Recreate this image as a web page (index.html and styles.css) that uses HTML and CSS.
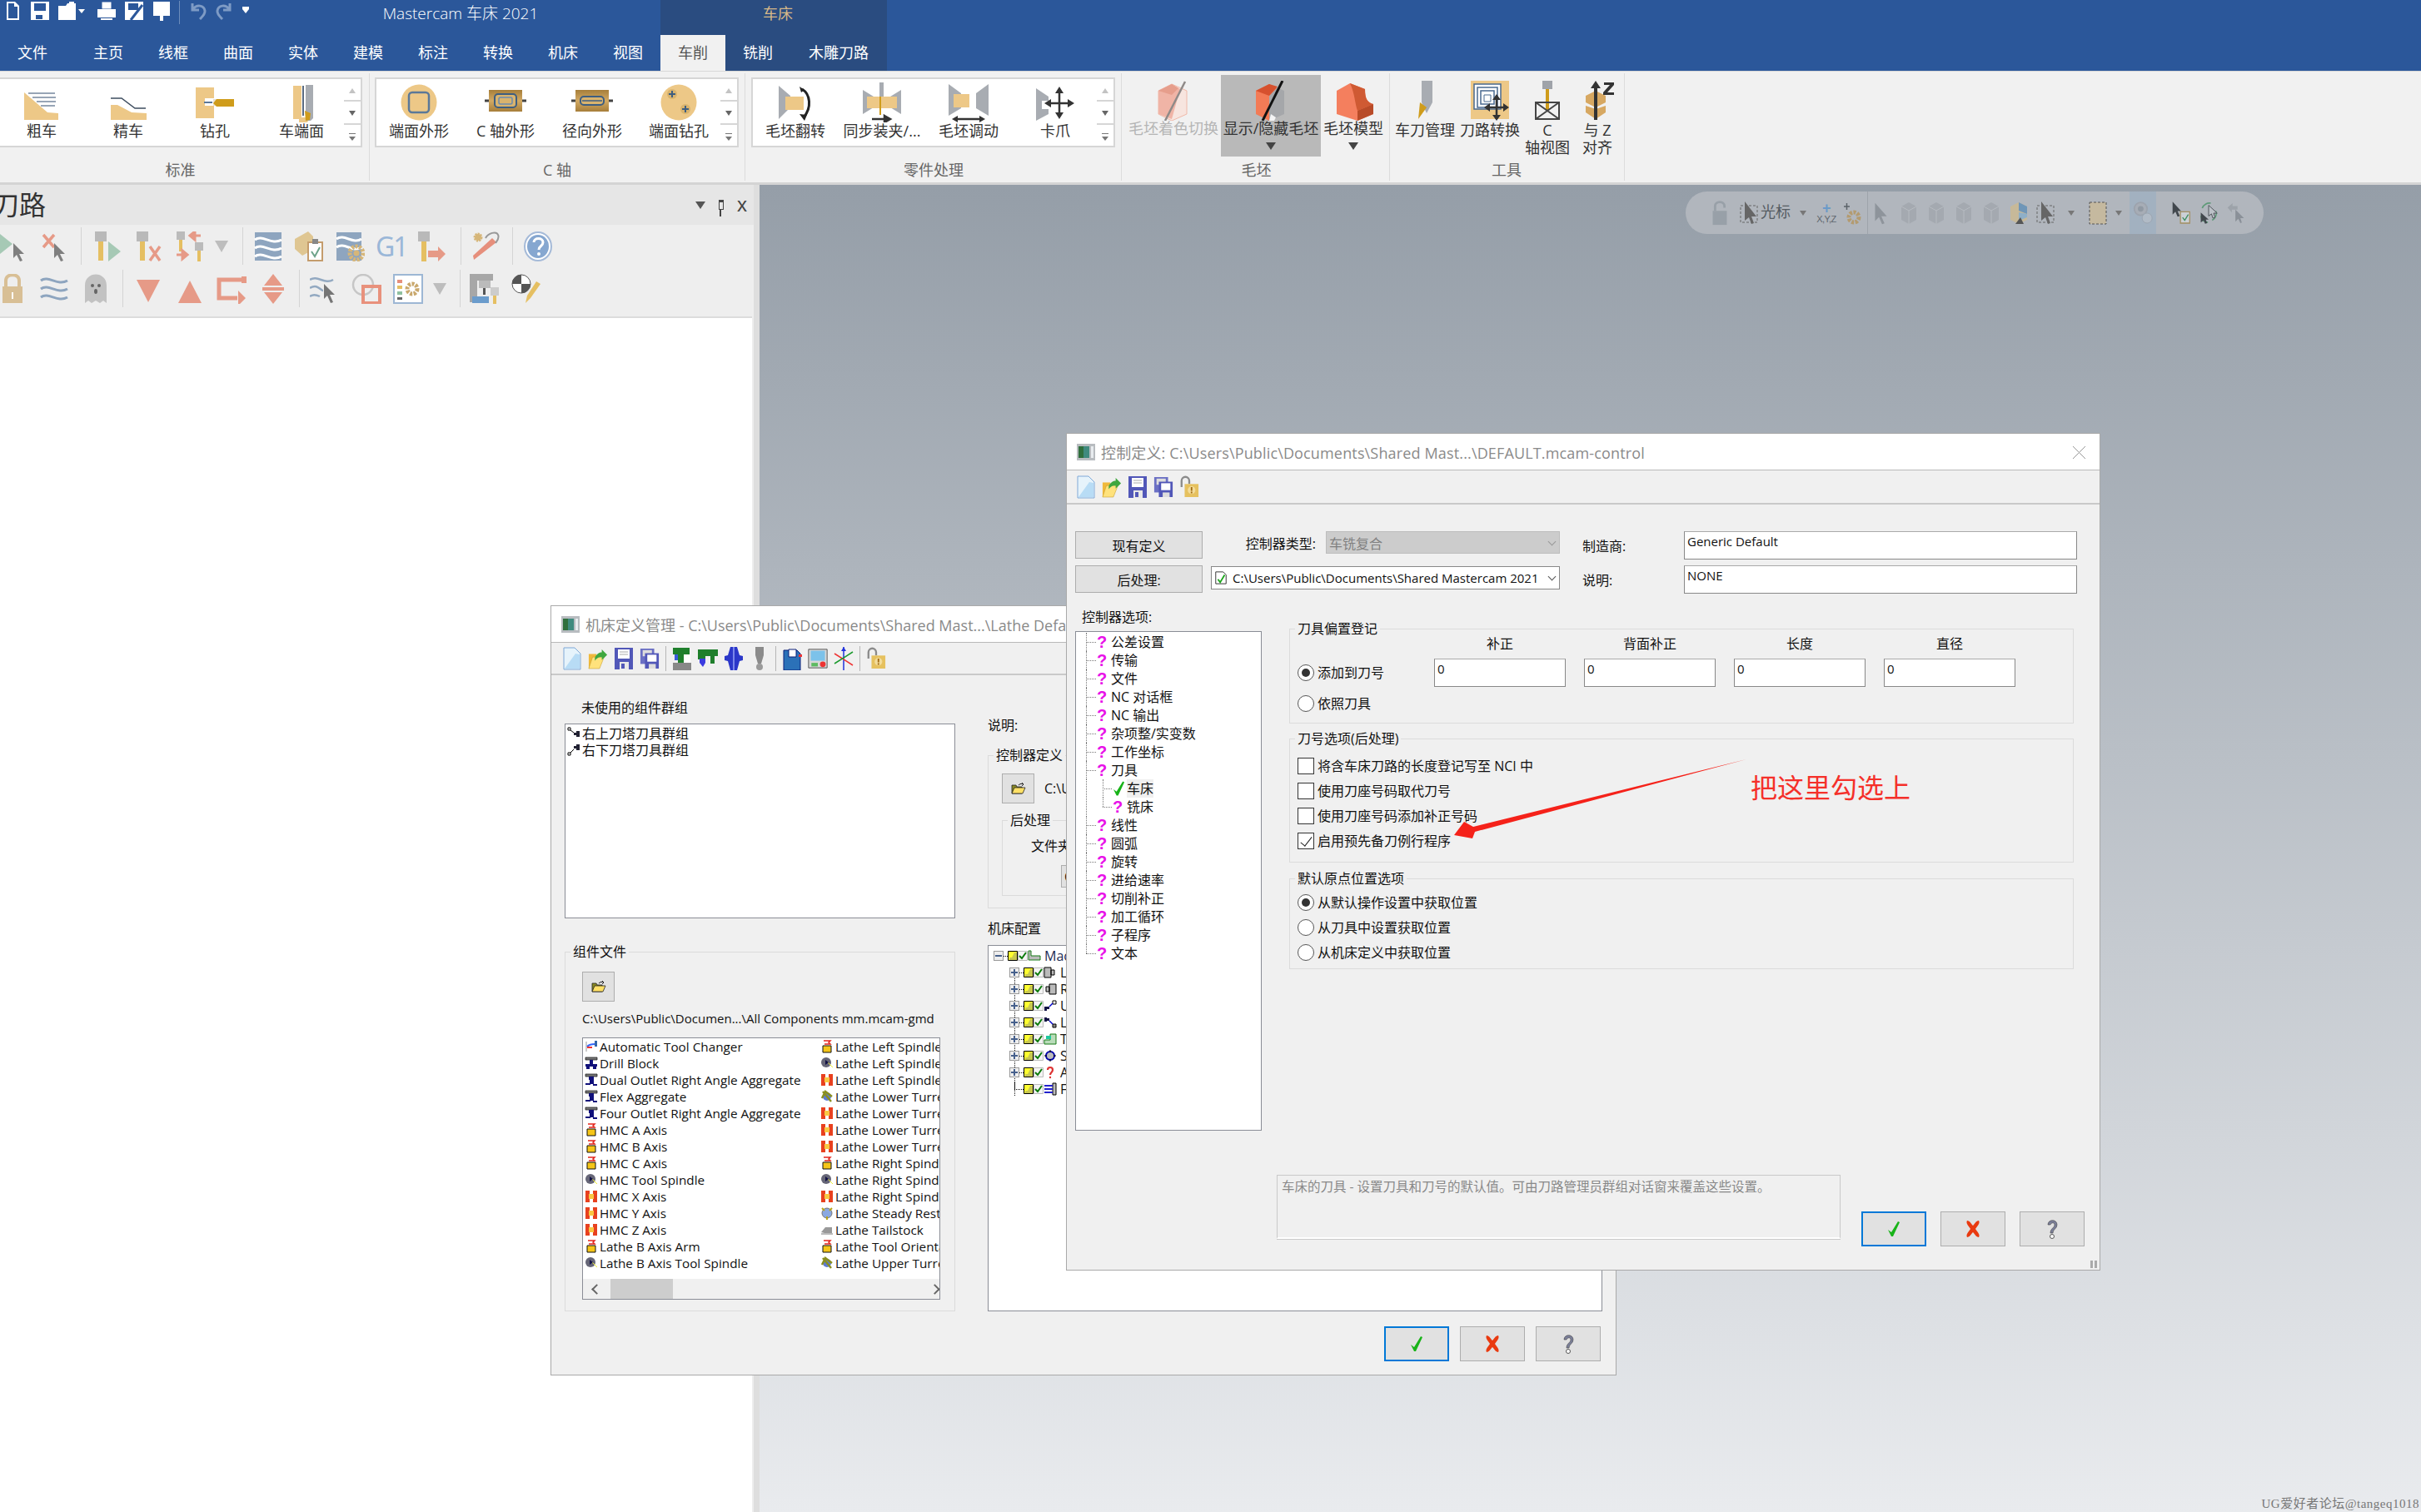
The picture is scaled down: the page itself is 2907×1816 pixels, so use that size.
FILE: index.html
```html
<!DOCTYPE html>
<html lang="zh">
<head>
<meta charset="utf-8">
<title>Mastercam 车床 2021</title>
<link rel="stylesheet" href="styles.css">
</head>
<body>
<svg class="defs" width="0" height="0">
<defs>
<symbol id="q-new" viewBox="0 0 24 24"><path d="M5 1h10l5 5v17H5z" fill="#fff"/><path d="M7 3v18h11V7h-4V3z" fill="#2b579a"/></symbol>
<symbol id="q-save" viewBox="0 0 24 24"><path d="M1 1h22v22H1z" fill="#fff"/><path d="M5 3h14v9H5z" fill="#2b579a"/><path d="M7 17h8v5H7z" fill="#2b579a"/></symbol>
<symbol id="q-open" viewBox="0 0 24 24"><path d="M1 6h9l2-3h10v20H1z" fill="#fff"/><path d="M14 1h6v5h-6z" fill="#fff"/></symbol>
<symbol id="q-print" viewBox="0 0 24 24"><path d="M6 1h12v9H6z" fill="#fff" stroke="#2b579a"/><path d="M1 10h22v10H1z" fill="#fff"/><path d="M5 21h14v2H5z" fill="#fff"/></symbol>
<symbol id="q-saveas" viewBox="0 0 24 24"><path d="M1 1h22v22H1z" fill="#fff"/><path d="M5 3h12v8H5z" fill="#2b579a"/><path d="M8 23L22 5" stroke="#2b579a" stroke-width="3"/></symbol>
<symbol id="q-pin" viewBox="0 0 24 24"><path d="M2 1h20v17H2z" fill="#fff"/><path d="M10 18h4v6h-4z" fill="#fff"/></symbol>
<symbol id="q-undo" viewBox="0 0 24 24"><path d="M6 3v8h8M7 10c4-6 13-5 14 2 .5 4-4 8-6 10" fill="none" stroke="#7e9bc5" stroke-width="3"/></symbol>
<symbol id="q-redo" viewBox="0 0 24 24"><path d="M18 3v8h-8M17 10c-4-6-13-5-14 2-.5 4 4 8 6 10" fill="none" stroke="#7e9bc5" stroke-width="3"/></symbol>

<symbol id="r-rough" viewBox="0 0 56 48"><path d="M7 12L35 36l13 1v8H7z" fill="#edc887"/><path d="M12 13h32M17 18h28M22 23h23M27 28h17" stroke="#75889f" stroke-width="1.5"/></symbol>
<symbol id="r-finish" viewBox="0 0 56 48"><path d="M7 27h8l17 9 18 1v8H7z" fill="#edc887"/><path d="M7 19h13l16 12h13" fill="none" stroke="#3e4d5f" stroke-width="1.5"/></symbol>
<symbol id="r-drill" viewBox="0 0 56 48"><path d="M5 6h22v13H16v9h11v15H5z" fill="#edc887"/><path d="M15 24h10" stroke="#5b7898" stroke-width="2"/><path d="M26 20h4v8h-4z" fill="#e9e2d2"/><path d="M30 20h21v9H30l-4-4z" fill="#cf9c1b"/></symbol>
<symbol id="r-face" viewBox="0 0 56 48"><path d="M18 4h10v40H18z" fill="#edc887"/><path d="M25 42h13l-3 6H25z" fill="#edc887"/><path d="M29 4h2v36h-2z" fill="#5b6b80"/><path d="M33 3h9v40l-3 3h-6z" fill="#a8acb2"/><path d="M32 34l7 3-1 8-5 1z" fill="#cf9c1b"/></symbol>
<symbol id="r-cface" viewBox="0 0 56 48"><circle cx="28" cy="24" r="21.5" fill="#edc887"/><rect x="16" y="12" width="24" height="24" rx="4" fill="none" stroke="#5b7898" stroke-width="2.5"/></symbol>
<linearGradient id="gb" x1="0" y1="0" x2="0" y2="1"><stop offset="0" stop-color="#a67e3a"/><stop offset=".5" stop-color="#d3aa64"/><stop offset="1" stop-color="#a67e3a"/></linearGradient>
<symbol id="r-caxis" viewBox="0 0 56 48"><path d="M8 9h40v26H8z" fill="url(#gb)"/><rect x="15" y="14" width="26" height="16" rx="4" fill="#d9b36d" stroke="#3e5e80" stroke-width="2"/><rect x="20" y="18" width="16" height="8" rx="2" fill="none" stroke="#6c8cae" stroke-width="1.5"/><path d="M3 22h5M48 22h5" stroke="#444" stroke-width="3"/></symbol>
<symbol id="r-radial" viewBox="0 0 56 48"><path d="M8 9h40v26H8z" fill="url(#gb)"/><rect x="14" y="17" width="28" height="10" rx="4" fill="#d9b36d" stroke="#3e5e80" stroke-width="2"/><path d="M16 22h24" stroke="#3e5e80" stroke-width="1.5"/><path d="M3 22h5M48 22h5" stroke="#444" stroke-width="3"/></symbol>
<symbol id="r-cdrill" viewBox="0 0 56 48"><circle cx="28" cy="24" r="21.5" fill="#edc887"/><circle cx="20" cy="14" r="6" fill="#d9b36d"/><circle cx="36" cy="32" r="6" fill="#d9b36d"/><path d="M16 14h8M20 10v8M32 32h8M36 28v8" stroke="#3e5e80" stroke-width="2"/></symbol>
<symbol id="r-flip" viewBox="0 0 56 48"><path d="M8 4l14 12v14L8 44z" fill="#a8acb2"/><path d="M16 17h22v16H16z" fill="#edc887"/><path d="M36 8c10 6 12 22 2 34" fill="none" stroke="#222" stroke-width="3"/><path d="M33 38l9 1-3 7z" fill="#222"/><path d="M33 5l6 4-4 3z" fill="#222"/></symbol>
<symbol id="r-sync" viewBox="0 0 56 48"><path d="M5 9l13 8v13L5 38zM51 9L38 17v13l13 8z" fill="#a8acb2"/><path d="M10 17h36v14H10z" fill="#edc887"/><path d="M25 0h5v17h-5z" fill="#a8acb2"/><path d="M25 17h2v22h-2z" fill="#cf9c1b"/><path d="M16 44h20M31 40l7 4-7 4z" stroke="#333" stroke-width="2.5" fill="#333"/></symbol>
<symbol id="r-stock" viewBox="0 0 56 48"><path d="M4 2l15 11v18L4 40zM52 2L37 13v18l15 9z" fill="#a8acb2"/><path d="M10 14h19v16H10z" fill="#edc887"/><path d="M30 15h7v14h-7z" fill="#fff"/><path d="M12 44h32" stroke="#333" stroke-width="2.5"/><path d="M8 44l7-4v8zM48 44l-7-4v8z" fill="#333"/></symbol>
<symbol id="r-jaw" viewBox="0 0 56 48"><path d="M5 7l15 10v5h-8v10h8v6L5 46z" fill="#a8acb2"/><path d="M33 8v32M19 25h28" stroke="#333" stroke-width="2.5"/><path d="M33 5l-5 8h10zM33 44l-5-8h10zM15 25l8-5v10zM51 25l-8-5v10z" fill="#333"/></symbol>
<symbol id="r-shade" viewBox="0 0 56 48"><path d="M10 12l16-8 18 8v28l-18 8-16-8z" fill="#f7e5df" stroke="#f0b9a9"/><path d="M10 12l16-8 10 6-10 36-16-6z" fill="#f0b4a6"/><path d="M10 12l16-8 8 5-8 8z" fill="#e69e8c"/><path d="M42 1L18 48" stroke="#8f8a88" stroke-width="2.5"/></symbol>
<symbol id="r-show" viewBox="0 0 56 48"><path d="M10 12l16-8 18 8v28l-18 8-16-8z" fill="#a5a7aa"/><path d="M10 12l16-8 9 5-9 9L26 48l-16-8z" fill="#f37b56"/><path d="M10 12l16-8 10 3-10 11z" fill="#d6512e"/><path d="M26 48h6l2-4-6-4z" fill="#f4f4f4"/><path d="M42 0L18 48" stroke="#111" stroke-width="3"/></symbol>
<symbol id="r-model" viewBox="0 0 56 48"><path d="M8 12l16-9 18 7c0 12 3 16 10 18v12l-19 8-25-8z" fill="#f47f5e"/><path d="M24 3l18 7c0 12 3 16 10 18l-19 8C30 28 30 16 24 3z" fill="#cf5a33"/><path d="M33 36l19-8v12l-19 8z" fill="#b84b28"/></symbol>
<symbol id="r-toolm" viewBox="0 0 56 48"><path d="M24 0h13v26l-7 13-6-13z" fill="#a8acb2"/><path d="M22 26l8 6-10 14z" fill="#cf9c1b"/></symbol>
<symbol id="r-trans" viewBox="0 0 56 48"><path d="M5 0h46v46H5z" fill="#edc887"/><path d="M9 4h32v30H9zM13 8h24v24H13zM17 12h16v16H17z" fill="#fff" stroke="#4a6a90" stroke-width="1.5"/><path d="M21 17h8v8h-8z" fill="none" stroke="#4a6a90"/><path d="M36 20v26M24 32h24" stroke="#333" stroke-width="2.5"/><path d="M36 16l-5 7h10zM36 48l-5-7h10zM21 32l7-5v10zM51 32l-7-5v10z" fill="#333"/></symbol>
<symbol id="r-cview" viewBox="0 0 56 48"><path d="M22 0h12v10H22z" fill="#9fa3a9"/><path d="M26 10h4v25h-4z" fill="#cf9c1b"/><path d="M14 26h28v20H14zM14 26l28 20M42 26L14 46" fill="none" stroke="#444" stroke-width="2"/></symbol>
<symbol id="r-zalign" viewBox="0 0 56 48"><path d="M14 18l12-6 12 6v8l-12 6-12-6zM14 30l12 4 12-4v8l-12 8-12-8z" fill="#d7a862"/><path d="M24 5h4v42h-4z" fill="#333"/><path d="M26 0l-6 9h12z" fill="#333"/><path d="M36 2h12v3l-8 9h8v3H35v-3l8-9h-7z" fill="#333"/></symbol>

<symbol id="p-play" viewBox="0 0 36 36"><path d="M2 3l15 12-15 12z" fill="#a6c9b5"/><path d="M18 14v18l4-4 4 8 3-1-4-8h6z" fill="#7f7f7f"/></symbol>
<symbol id="p-x" viewBox="0 0 36 36"><path d="M5 4l13 15M18 4L5 19" stroke="#e69a87" stroke-width="3.5"/><path d="M18 14v18l4-4 4 8 3-1-4-8h6z" fill="#7f7f7f"/></symbol>
<symbol id="p-toolplay" viewBox="0 0 36 36"><path d="M4 0h14v12H4z" fill="#b9b9b9"/><path d="M8 12h6v23H8z" fill="#e5bf62"/><path d="M20 12l15 12-15 12z" fill="#a6c9b5"/></symbol>
<symbol id="p-toolx" viewBox="0 0 36 36"><path d="M4 0h14v12H4z" fill="#b9b9b9"/><path d="M8 12h6v23H8z" fill="#e5bf62"/><path d="M20 18l12 17M32 18L20 35" stroke="#e69a87" stroke-width="3.5"/></symbol>
<symbol id="p-toolswap" viewBox="0 0 36 36"><path d="M2 0h10v10H2zM24 13h10v10H24z" fill="#bbb"/><path d="M5 10h4v14H5zM27 23h4v13h-4z" fill="#e5bf62"/><path d="M31 5H18M18 5l6-5v10zM2 28h13M15 28l-6-5v10z" stroke="#e69a87" stroke-width="3" fill="#e69a87"/></symbol>
<symbol id="p-wave" viewBox="0 0 36 36"><path d="M2 1h32v34H2z" fill="#8ea5bf"/><path d="M2 10c9-7 20 7 32 0M2 20c9-7 20 7 32 0M2 30c9-7 20 7 32 0" fill="none" stroke="#fff" stroke-width="3"/></symbol>
<symbol id="p-box" viewBox="0 0 36 36"><path d="M1 9L17 0l6 6v16l-13 7-9-8z" fill="#dfc692"/><path d="M17 13h17v22H17z" fill="#fff" stroke="#c49c6c" stroke-width="2"/><path d="M21 24l4 6 6-11" fill="none" stroke="#6ea38a" stroke-width="2"/><path d="M22 9h7v6h-7z" fill="#888"/></symbol>
<symbol id="p-wavegear" viewBox="0 0 36 36"><path d="M2 1h30v34H2z" fill="#8ea5bf"/><path d="M2 9c9-7 20 7 30 0M2 19c9-7 20 7 30 0" fill="none" stroke="#fff" stroke-width="3"/><circle cx="26" cy="26" r="8" fill="none" stroke="#d6b679" stroke-width="5" stroke-dasharray="3 1.5"/><circle cx="26" cy="26" r="3.5" fill="#d6b679"/></symbol>
<symbol id="p-toolarrow" viewBox="0 0 36 36"><path d="M2 0h14v12H2z" fill="#b9b9b9"/><path d="M6 12h6v24H6z" fill="#e5bf62"/><path d="M14 23h12v-5l9 9-9 9v-5H14z" fill="#e69a87"/></symbol>
<symbol id="p-stick" viewBox="0 0 36 36"><path d="M3 34l-1-5L25 8l5 5z" fill="#e68f7c"/><path d="M17 8c3-6 13-9 15-4 2 4-1 7-3 10" fill="none" stroke="#999" stroke-width="2"/><circle cx="8" cy="7" r="4" fill="#d6b679" stroke="#d6b679" stroke-dasharray="2 1" stroke-width="3"/></symbol>
<symbol id="p-help" viewBox="0 0 36 36"><ellipse cx="18" cy="18" rx="16" ry="17" fill="#fff" stroke="#a5bad8" stroke-width="2"/><ellipse cx="18" cy="18" rx="13" ry="14" fill="#86a7d0"/><path d="M13 13c0-6 11-6 11 0 0 5-5 4-5 9" fill="none" stroke="#fff" stroke-width="3"/><circle cx="19" cy="27" r="2" fill="#fff"/></symbol>
<symbol id="p-lock" viewBox="0 0 36 36"><path d="M10 15V8c0-9 16-9 16 0v7" fill="none" stroke="#d8bf95" stroke-width="4"/><path d="M6 15h24v20H6z" fill="#d8bf95"/><path d="M17 22h2v8h-2z" fill="#fff"/></symbol>
<symbol id="p-waves" viewBox="0 0 36 36"><path d="M2 8c9-7 20 7 32 0M2 18c9-7 20 7 32 0M2 28c9-7 20 7 32 0" fill="none" stroke="#8ea5bf" stroke-width="3"/></symbol>
<symbol id="p-ghost" viewBox="0 0 36 36"><path d="M5 35V14c0-18 26-18 26 0v21l-4-3-4 3-5-3-5 3-4-3z" fill="#c2c2c2"/><circle cx="14" cy="14" r="2" fill="#666"/><circle cx="22" cy="14" r="2" fill="#666"/><ellipse cx="18" cy="21" rx="2" ry="3" fill="#666"/></symbol>
<symbol id="p-down" viewBox="0 0 36 36"><path d="M4 7h28L18 34z" fill="#e69a87"/></symbol>
<symbol id="p-up" viewBox="0 0 36 36"><path d="M4 35h28L18 8z" fill="#e69a87"/></symbol>
<symbol id="p-loop" viewBox="0 0 36 36"><path d="M30 7H3v22h22" fill="none" stroke="#e69a87" stroke-width="5"/><path d="M30 3h6v8h-6zM26 20l9 9-9 9z" fill="#e69a87"/></symbol>
<symbol id="p-updown" viewBox="0 0 36 36"><path d="M18 0l11 14H7zM18 36l11-14H7zM5 16h26v4H5z" fill="#e69a87"/></symbol>
<symbol id="p-wavecur" viewBox="0 0 36 36"><path d="M0 7c9-6 18 6 28 0M0 17c9-6 13 3 16 3M0 27c4-3 8-2 12 0" fill="none" stroke="#93a9c1" stroke-width="2.5"/><path d="M17 12v18l4-4 4 9 3-1-4-9h6z" fill="#757575"/></symbol>
<symbol id="p-circsq" viewBox="0 0 36 36"><circle cx="14" cy="13" r="12" fill="none" stroke="#c6c6c6" stroke-width="2.5"/><path d="M14 15h20v20H14z" fill="none" stroke="#e8917c" stroke-width="4"/></symbol>
<symbol id="p-list" viewBox="0 0 36 36"><path d="M1 1h34v34H1z" fill="#fff" stroke="#9db7d4" stroke-width="2"/><path d="M5 7h6v4H5z" fill="#e68f7c"/><path d="M5 14h6v4H5z" fill="#e5bf62"/><path d="M5 21h6v4H5z" fill="#8fc0a0"/><path d="M5 28h6v3H5z" fill="#666"/><circle cx="23" cy="18" r="6" fill="none" stroke="#c9a86d" stroke-width="5" stroke-dasharray="3 1.5"/></symbol>
<symbol id="p-machine" viewBox="0 0 36 36"><path d="M0 0h28v8H0zM0 8h9v26H0z" fill="#a7a7a7"/><path d="M11 8h14v9H11z" fill="#bbb"/><path d="M16 17h3v8h-3z" fill="#555"/><path d="M3 27h20v8H3z" fill="#6b9ccc"/><path d="M25 16h10v10H25z" fill="#ccc"/><path d="M28 26h4v10h-4z" fill="#e5bf62"/></symbol>
<symbol id="p-disc" viewBox="0 0 36 36"><circle cx="12" cy="12" r="11" fill="#fff" stroke="#555"/><path d="M12 12V1a11 11 0 0 0-11 11zM12 12v11a11 11 0 0 0 11-11z" fill="#555"/><path d="M17 35l2-9L30 9l5 3-12 17z" fill="#e5bf62"/></symbol>

<symbol id="d-title" viewBox="0 0 22 20"><path d="M0 0h22v20H0z" fill="#b8bcc0"/><path d="M2 3h13v14H2z" fill="#3f8a7e"/><path d="M2 3h6v14H2z" fill="#2f6f3d"/><path d="M17 3h3v14h-3z" fill="#e8ecef"/></symbol>
<symbol id="d-new" viewBox="0 0 24 28"><path d="M2 1h13l7 7v19H2z" fill="#e6f3fb" stroke="#7ea9d8"/><path d="M3 26L16 8l5 1v17z" fill="#b8dcf5"/></symbol>
<symbol id="d-open" viewBox="0 0 26 28"><path d="M1 8h10v19H1z" fill="#f0b93b"/><path d="M1 27l5-15h15l-6 15z" fill="#ffe27c" stroke="#c49a2b" stroke-width=".6"/><path d="M9 13c2-5 6-7 9-7V2l7 7-7 7v-4c-3 0-6 0-9 5z" fill="#3fa73f"/></symbol>
<symbol id="d-save" viewBox="0 0 24 28"><path d="M1 1h22v26H1z" fill="#5157b8"/><path d="M5 3h14v11H5z" fill="#fff"/><path d="M7 6h10M7 9h10" stroke="#aaa"/><path d="M7 18h11v9H7z" fill="#e8e8e8"/><path d="M9 20h4v6H9z" fill="#5157b8"/></symbol>
<symbol id="d-saveall" viewBox="0 0 26 28"><path d="M1 1h18v20H1z" fill="#6b70c4"/><path d="M4 3h12v8H4z" fill="#ddd"/><path d="M7 7h18v20H7z" fill="#5157b8"/><path d="M10 9h12v9H10z" fill="#fff"/><path d="M12 21h9v6h-9z" fill="#ddd"/></symbol>
<symbol id="d-lock" viewBox="0 0 26 28"><path d="M3 14V6c0-7 10-7 10 0v4" fill="none" stroke="#8b8b8b" stroke-width="2.5"/><path d="M7 10h18v17H7z" fill="#e6c15f"/><circle cx="16" cy="18" r="5" fill="#f3dc9b"/><path d="M15 14h2v5h-2zM15 20h2v2h-2z" fill="#a16a10"/></symbol>
<symbol id="d-b1" viewBox="0 0 24 28"><path d="M1 1h20v8h-7v10h-7V9H1z" fill="#1f7f2c"/><path d="M3 9h4v7H3z" fill="#3b5bdb"/><path d="M1 19h22v9H1z" fill="#888"/><path d="M14 9h8v10h-8z" fill="#fff"/></symbol>
<symbol id="d-b2" viewBox="0 0 24 28"><path d="M0 3h24v8h-4v9h-5v-9H9v4H0z" fill="#1f7f2c"/><path d="M2 14h7v5l-3 5-4-5z" fill="#3b3be0"/></symbol>
<symbol id="d-b3" viewBox="0 0 24 28"><path d="M8 0h8l3 10 4 1v5l-4 1-3 11H8L5 17l-4-1v-5l4-1z" fill="#2b37c9"/><path d="M12 0v28" stroke="#7a86ea" stroke-width="2"/></symbol>
<symbol id="d-b4" viewBox="0 0 24 28"><path d="M7 0h10v10l-3 10h-4L7 10z" fill="#8b8b8b"/><circle cx="12" cy="24" r="4" fill="#9a9a9a"/></symbol>
<symbol id="d-b5" viewBox="0 0 24 28"><path d="M2 4h16l4 4v20H2z" fill="#2b71b8" stroke="#0b1f78"/><path d="M8 3h9v9H8z" fill="#fff" stroke="#0b1f78"/><path d="M20 9h4v3h-4z" fill="#e33"/></symbol>
<symbol id="d-b6" viewBox="0 0 28 28"><path d="M1 1h26v26H1z" fill="#d8d8d8" stroke="#444"/><path d="M4 3h20v14H4z" fill="#7cc2ea"/><path d="M5 20h9v5H5z" fill="#5dbb62"/><circle cx="21" cy="22" r="4" fill="#e33"/></symbol>
<symbol id="d-b7" viewBox="0 0 24 28"><path d="M12 0v28" stroke="#2233dd" stroke-width="1.5"/><path d="M12 0l-3 5h6z" fill="#2233dd"/><path d="M1 8l22 14" stroke="#e33" stroke-width="1.5"/><path d="M23 6L1 20" stroke="#1a9a2c" stroke-width="1.5"/></symbol>
<symbol id="d-folder" viewBox="0 0 18 14"><path d="M1 3h5l1 2h6v8H1z" fill="#8a8a24" stroke="#222" stroke-width=".8"/><path d="M1 13l3-7h13l-3 7z" fill="#ffe066" stroke="#222" stroke-width=".8"/><path d="M9 3c2-2 4-2 6-1m0 0l-2-2m2 2l-2 2" fill="none" stroke="#222"/></symbol>

<symbol id="t-doc" viewBox="0 0 16 18"><path d="M1 1h10l4 4v12H1z" fill="#fff" stroke="#222"/><path d="M4 11l3 4 6-10" fill="none" stroke="#1ba51b" stroke-width="2"/></symbol>
<symbol id="t-tick" viewBox="0 0 16 20"><path d="M1 11l4 3L13 1l2 1-8 17H5z" fill="#18b318"/></symbol>
<symbol id="t-cancel" viewBox="0 0 20 22"><path d="M3 1c3 0 5 4 7 6 2-2 4-6 7-6 2 3-2 7-4 10 2 3 6 7 4 10-3 0-5-4-7-6-2 2-4 6-7 6-2-3 2-7 4-10C5 8 1 4 3 1z" fill="#e93a10"/></symbol>
<symbol id="t-help" viewBox="0 0 16 24"><path d="M3 7c0-7 11-7 11 0 0 5-5 5-5 10H6c0-6 5-6 5-10 0-3-4-3-5 0z" fill="#7b7f99" stroke="#444" stroke-width=".6"/><circle cx="8" cy="21" r="2.5" fill="#fff" stroke="#555"/></symbol>
<symbol id="u1" viewBox="0 0 16 16"><path d="M1 1h3v3H1zM4 4l4 3" fill="#fff" stroke="#000"/><path d="M11 5h4v7h-4zM8 7h3v3H8z" fill="#223" /></symbol>
<symbol id="u2" viewBox="0 0 16 16"><path d="M1 11h3v3H1zM4 11l4-4" fill="#fff" stroke="#000"/><path d="M11 1h4v7h-4zM8 3h3v3H8z" fill="#223"/></symbol>
<symbol id="l-atc" viewBox="0 0 16 16"><path d="M1 2h2v12H1z" fill="#ccc"/><path d="M3 8c3-3 6-3 9-3" fill="none" stroke="#36f" stroke-width="2"/><path d="M3 9h6" stroke="#e33" stroke-width="2"/><path d="M12 1h3v7h-3z" fill="#36a"/></symbol>
<symbol id="l-block" viewBox="0 0 16 16"><path d="M1 1h14v3H1z" fill="#777" stroke="#111" stroke-width=".7"/><path d="M6 4h4v5H6zM1 9h14v3H1zM2 12h4v3H2zM10 12h4v3h-4z" fill="#10107a"/></symbol>
<symbol id="l-outlet" viewBox="0 0 16 16"><path d="M1 1h14v3H1z" fill="#777" stroke="#111" stroke-width=".7"/><path d="M5 4h6v4H5zM6 8h5v5H6zM1 12h6v2H1zM10 13h5v2h-5z" fill="#10107a"/></symbol>
<symbol id="l-axis" viewBox="0 0 16 16"><path d="M3 7h10v8H3z" fill="#f5c518" stroke="#111"/><path d="M4 1h8l-2 2 2 2H5" fill="none" stroke="#e3241b" stroke-width="1.5"/></symbol>
<symbol id="l-spin" viewBox="0 0 16 16"><circle cx="7" cy="7" r="6" fill="#667"/><path d="M9 7l6 6" stroke="#ee3"/><path d="M6 4l4 3-4 3z" fill="#114"/></symbol>
<symbol id="l-linear" viewBox="0 0 16 16"><path d="M1 1h5v5h4V1h5v14h-5v-5H6v5H1z" fill="#e8411f"/><path d="M5 5h6v6H5z" fill="#f9c744"/></symbol>
<symbol id="l-turret" viewBox="0 0 16 16"><circle cx="8" cy="8" r="5" fill="#5e7bd2"/><path d="M3 2l10 12M2 10l4-8 8 6" fill="none" stroke="#8a8f1f" stroke-width="2.5"/></symbol>
<symbol id="l-steady" viewBox="0 0 16 16"><circle cx="8" cy="8" r="6" fill="#8aa8e0" stroke="#777"/><path d="M2 2l3 3M14 2l-3 3M8 12v4" stroke="#b9a41a" stroke-width="2"/></symbol>
<symbol id="l-tail" viewBox="0 0 16 16"><path d="M1 11l5-6h8v7H5z" fill="#999"/><path d="M1 13h14" stroke="#bbb" stroke-width="2"/></symbol>
<symbol id="m-yel" viewBox="0 0 12 12"><path d="M.5.5h11v11H.5z" fill="#ffff30" stroke="#000"/><path d="M8 2h3v9H2V8h3z" fill="#c8c850"/></symbol>
<symbol id="m-chk" viewBox="0 0 12 12"><path d="M.5.5h11v11H.5z" fill="#f4f4f4" stroke="#bbb"/><path d="M2 6l3 3 5-7" fill="none" stroke="#0a7a0a" stroke-width="2"/></symbol>
<symbol id="m1" viewBox="0 0 16 12"><path d="M1 0h3v6h11v5H1z" fill="#bbb" stroke="#167a16"/></symbol>
<symbol id="m2" viewBox="0 0 16 14"><path d="M1 1h8v12H1zM9 4h4v6H9z" fill="#bbb" stroke="#000"/></symbol>
<symbol id="m3" viewBox="0 0 16 14"><path d="M7 1h8v12H7zM3 4h4v6H3z" fill="#bbb" stroke="#000"/></symbol>
<symbol id="m4" viewBox="0 0 16 14"><path d="M1 8h3v5H1zM4 8h3v3H4z" fill="#114"/><path d="M11 1h4v4h-4z" fill="#fff" stroke="#000"/><path d="M7 8l4-4" stroke="#00c" stroke-width="1.5"/></symbol>
<symbol id="m5" viewBox="0 0 16 14"><path d="M1 1h3v5H1zM4 2h3v3H4z" fill="#114"/><path d="M11 9h4v4h-4z" fill="#888" stroke="#000"/><path d="M7 5l4 4" stroke="#00c" stroke-width="1.5"/></symbol>
<symbol id="m6" viewBox="0 0 16 14"><path d="M1 13V8h7V1h7v12z" fill="#b9dcb9" stroke="#167a16"/><path d="M3 3h6v4H3z" fill="#1ec8a0"/></symbol>
<symbol id="m7" viewBox="0 0 16 14"><circle cx="8" cy="7" r="5" fill="#bbb" stroke="#00a" stroke-width="2"/><path d="M8 0v3M8 11v3M1 7h3M12 7h3" stroke="#000"/></symbol>
<symbol id="m8" viewBox="0 0 16 14"><path d="M5 4c0-4 6-4 6 0 0 3-3 3-3 6" fill="none" stroke="#d33" stroke-width="2.2"/><circle cx="8" cy="13" r="1.2" fill="#d33"/></symbol>
<symbol id="m9" viewBox="0 0 16 14"><path d="M11 0h4v14h-4z" fill="#bbb" stroke="#000"/><path d="M1 2h10v2H1zM1 6h10v2H1zM1 10h10v2H1z" fill="#22c"/></symbol>
<symbol id="v-lock" viewBox="0 0 24 34"><path d="M6 14V8c0-7 12-7 12 0v2" fill="none" stroke="#98a0a8" stroke-width="3"/><path d="M3 14h18v18H3z" fill="#98a0a8"/></symbol>
<symbol id="v-cursel" viewBox="0 0 24 30"><rect x="1" y="6" width="20" height="20" fill="none" stroke="#666" stroke-dasharray="3 2"/><path d="M6 1v23l5-4 3 8 3-1-3-8h6z" fill="#666"/></symbol>
<symbol id="v-gear" viewBox="0 0 24 30"><path d="M2 7h7M5.500 3v8" stroke="#5b6269" stroke-width="1.500"/><circle cx="14" cy="20" r="6" fill="none" stroke="#b39b70" stroke-width="5" stroke-dasharray="3 1.5"/></symbol>
<symbol id="v-cube" viewBox="0 0 24 30"><path d="M3 7l9-5 9 5v16l-9 5-9-5z" fill="#a4a9b0"/><path d="M3 7l9 5 9-5" fill="none" stroke="#b6bbc1"/><path d="M12 12v16" stroke="#b6bbc1"/></symbol>
<symbol id="v-hex" viewBox="0 0 24 30"><path d="M2 7l10-5 10 5v16l-10 5-10-5z" fill="#c7b999"/><path d="M12 2l10 5v9L12 12z" fill="#6f96b8"/><path d="M12 14v10l10-4v-4z" fill="#8eafc8"/><path d="M8 28l6-8 4 8z" fill="#555"/></symbol>
<symbol id="v-tan" viewBox="0 0 24 30"><rect x="2" y="2" width="20" height="26" fill="#c5b99f" stroke="#555" stroke-dasharray="3 2"/></symbol>
<symbol id="v-clock" viewBox="0 0 28 34"><circle cx="11" cy="11" r="9" fill="#a7adb6" stroke="#9ca3ad" stroke-width="2"/><circle cx="11" cy="11" r="4" fill="#9099a3"/><circle cx="20" cy="24" r="7" fill="#b1bbc6" stroke="#99a3ae"/></symbol>
<symbol id="v-curchk" viewBox="0 0 28 34"><path d="M2 1v18l4-4 3 7 3-1-3-7h5z" fill="#41474d"/><path d="M13 15h13v16H13z" fill="#cbd0d5" stroke="#a38f62" stroke-width="1.5"/><path d="M16 23l3 4 5-8" fill="none" stroke="#3a8d5e" stroke-width="1.500"/></symbol>
<symbol id="v-cycle" viewBox="0 0 28 34"><path d="M5 10a11 11 0 0 1 12-7M24 14a11 11 0 0 1-5 13M13 30a11 11 0 0 1-10-9" fill="none" stroke="#5e9a78" stroke-width="2"/><path d="M14 6v15l4-3 2 6 3-1-2-6h5z" fill="#bcc1c7" stroke="#41474d"/><path d="M3 16v14l4-3 2 5 3-1-2-5h4z" fill="#41474d"/></symbol>
<symbol id="v-ucur" viewBox="0 0 28 34"><path d="M2 9l7-6v4h7v5H8v4z" fill="#9da3aa"/><path d="M13 12v17l4-4 3 6 2-1-2-6h5z" fill="#8a9098"/></symbol>
<symbol id="v-cur" viewBox="0 0 24 34"><path d="M4 4v23l5-5 4 9 3-1-4-9h7z" fill="#8e949b"/></symbol>
</defs>
</svg>

<div class="app">
  <header class="titlebar">
    <div class="qat">
      <svg class="qi"><use href="#q-new"/></svg>
      <svg class="qi"><use href="#q-save"/></svg>
      <svg class="qi"><use href="#q-open"/></svg><span class="qdd"></span>
      <svg class="qi"><use href="#q-print"/></svg>
      <svg class="qi"><use href="#q-saveas"/></svg>
      <svg class="qi"><use href="#q-pin"/></svg>
      <span class="qsep"></span>
      <svg class="qi"><use href="#q-undo"/></svg>
      <svg class="qi"><use href="#q-redo"/></svg><span class="qdd qdd-end"></span>
    </div>
    <div class="apptitle">Mastercam 车床 2021</div>
    <div class="ctxtab">车床</div>
  </header>
  <nav class="tabs">
    <div class="tab tab-file">文件</div><div class="tab">主页</div><div class="tab">线框</div><div class="tab">曲面</div><div class="tab">实体</div><div class="tab">建模</div><div class="tab">标注</div><div class="tab">转换</div><div class="tab">机床</div><div class="tab">视图</div><div class="tab tab-on">车削</div><div class="tab tab-ctx">铣削</div><div class="tab tab-ctx tab-wide">木雕刀路</div>
  </nav>

  <section class="ribbon">
    <div class="rg rg1">
      <div class="rbody">
        <div class="gallery gfirst">
          <div class="gi"><svg class="ri"><use href="#r-rough"/></svg><span>粗车</span></div>
          <div class="gi"><svg class="ri"><use href="#r-finish"/></svg><span>精车</span></div>
          <div class="gi"><svg class="ri"><use href="#r-drill"/></svg><span>钻孔</span></div>
          <div class="gi"><svg class="ri"><use href="#r-face"/></svg><span>车端面</span></div>
          <div class="gscroll"><i class="sup"></i><i class="sdn"></i><i class="smore"></i></div>
        </div>
      </div>
      <div class="rlabel">标准</div>
    </div>
    <div class="rg rg2">
      <div class="rbody">
        <div class="gallery">
          <div class="gi"><svg class="ri"><use href="#r-cface"/></svg><span>端面外形</span></div>
          <div class="gi"><svg class="ri"><use href="#r-caxis"/></svg><span>C 轴外形</span></div>
          <div class="gi"><svg class="ri"><use href="#r-radial"/></svg><span>径向外形</span></div>
          <div class="gi"><svg class="ri"><use href="#r-cdrill"/></svg><span>端面钻孔</span></div>
          <div class="gscroll"><i class="sup"></i><i class="sdn"></i><i class="smore"></i></div>
        </div>
      </div>
      <div class="rlabel">C 轴</div>
    </div>
    <div class="rg rg3">
      <div class="rbody">
        <div class="gallery">
          <div class="gi"><svg class="ri"><use href="#r-flip"/></svg><span>毛坯翻转</span></div>
          <div class="gi"><svg class="ri"><use href="#r-sync"/></svg><span>同步装夹/...</span></div>
          <div class="gi"><svg class="ri"><use href="#r-stock"/></svg><span>毛坯调动</span></div>
          <div class="gi"><svg class="ri"><use href="#r-jaw"/></svg><span>卡爪</span></div>
          <div class="gscroll"><i class="sup"></i><i class="sdn"></i><i class="smore"></i></div>
        </div>
      </div>
      <div class="rlabel">零件处理</div>
    </div>
    <div class="rg rg4">
      <div class="rbody rbtns">
        <div class="rb rb-108 rb-off"><svg class="ri"><use href="#r-shade"/></svg><span>毛坯着色切换</span></div>
        <div class="rb rb-120 rb-hot"><svg class="ri"><use href="#r-show"/></svg><span>显示/隐藏毛坯</span><i class="caret"></i></div>
        <div class="rb rb-72"><svg class="ri"><use href="#r-model"/></svg><span>毛坯模型</span><i class="caret"></i></div>
      </div>
      <div class="rlabel">毛坯</div>
    </div>
    <div class="rg rg5">
      <div class="rbody rbtns">
        <div class="rb rb-74"><svg class="ri"><use href="#r-toolm"/></svg><span>车刀管理</span></div>
        <div class="rb rb-76"><svg class="ri"><use href="#r-trans"/></svg><span>刀路转换</span></div>
        <div class="rb rb-56"><svg class="ri"><use href="#r-cview"/></svg><span>C<br>轴视图</span></div>
        <div class="rb rb-58"><svg class="ri"><use href="#r-zalign"/></svg><span>与 Z<br>对齐</span></div>
      </div>
      <div class="rlabel">工具</div>
    </div>
  </section>

  <main class="work">
    <aside class="panel">
      <div class="phead">
        <div class="ptitle">刀路</div>
        <div class="pctl"><i class="pdrop"></i><span class="ppin"></span><span class="pclose">x</span></div>
      </div>
      <div class="pbar">
        <div class="pgroup pa1"><svg class="pi"><use href="#p-play"/></svg><svg class="pi"><use href="#p-x"/></svg></div>
        <div class="pgroup pa2"><svg class="pi"><use href="#p-toolplay"/></svg><svg class="pi"><use href="#p-toolx"/></svg><svg class="pi"><use href="#p-toolswap"/></svg><i class="pdd"></i></div>
        <div class="pgroup pa3"><svg class="pi"><use href="#p-wave"/></svg><svg class="pi"><use href="#p-box"/></svg><svg class="pi"><use href="#p-wavegear"/></svg><span class="gone">G1</span><svg class="pi"><use href="#p-toolarrow"/></svg></div>
        <div class="pgroup pa4"><svg class="pi"><use href="#p-stick"/></svg></div>
        <div class="pgroup pa5"><svg class="pi"><use href="#p-help"/></svg></div>
      </div>
      <div class="pbar">
        <div class="pgroup pb1"><svg class="pi"><use href="#p-lock"/></svg><svg class="pi"><use href="#p-waves"/></svg><svg class="pi"><use href="#p-ghost"/></svg></div>
        <div class="pgroup pb2"><svg class="pi"><use href="#p-down"/></svg><svg class="pi"><use href="#p-up"/></svg><svg class="pi"><use href="#p-loop"/></svg><svg class="pi"><use href="#p-updown"/></svg></div>
        <div class="pgroup pb3"><svg class="pi"><use href="#p-wavecur"/></svg><svg class="pi"><use href="#p-circsq"/></svg><svg class="pi"><use href="#p-list"/></svg><i class="pdd"></i></div>
        <div class="pgroup pb4"><svg class="pi"><use href="#p-machine"/></svg><svg class="pi"><use href="#p-disc"/></svg></div>
      </div>
      <div class="pcontent"></div>
    </aside>
    <div class="splitter"></div>
    <div class="viewport">
      <div class="pill">
        <div class="pill-lock"><svg class="v24"><use href="#v-lock"/></svg></div>
        <div class="pill-a">
          <svg class="v24"><use href="#v-cursel"/></svg><span class="pill-text">光标</span><i class="vdd"></i>
          <span class="xyz"><b>+</b>X,Y,Z</span><svg class="v24"><use href="#v-gear"/></svg>
        </div>
        <div class="pill-b">
          <svg class="v24"><use href="#v-cur"/></svg><svg class="v24"><use href="#v-cube"/></svg><svg class="v24"><use href="#v-cube"/></svg><svg class="v24"><use href="#v-cube"/></svg><svg class="v24"><use href="#v-cube"/></svg><svg class="v24"><use href="#v-hex"/></svg><svg class="v24"><use href="#v-cursel"/></svg><i class="vdd"></i><svg class="v24"><use href="#v-tan"/></svg><i class="vdd"></i>
          <span class="pill-hi"><svg class="v24"><use href="#v-clock"/></svg></span>
          <svg class="v24"><use href="#v-curchk"/></svg><svg class="v24"><use href="#v-cycle"/></svg><svg class="v24"><use href="#v-ucur"/></svg>
        </div>
      </div>
    </div>
  </main>

  <section class="win back">
    <div class="wtitle"><svg class="wicon"><use href="#d-title"/></svg><span>机床定义管理 - C:\Users\Public\Documents\Shared Mast...\Lathe Defa</span></div>
    <div class="wtools wtools-back">
      <svg class="ti"><use href="#d-new"/></svg><svg class="ti"><use href="#d-open"/></svg><svg class="ti"><use href="#d-save"/></svg><svg class="ti"><use href="#d-saveall"/></svg><i class="tsep"></i>
      <svg class="ti"><use href="#d-b1"/></svg><svg class="ti"><use href="#d-b2"/></svg><svg class="ti"><use href="#d-b3"/></svg><svg class="ti"><use href="#d-b4"/></svg><i class="tsep"></i>
      <svg class="ti"><use href="#d-b5"/></svg><svg class="ti"><use href="#d-b6"/></svg><svg class="ti"><use href="#d-b7"/></svg><i class="tsep"></i>
      <svg class="ti"><use href="#d-lock"/></svg>
    </div>
    <div class="backbody">
      <div class="bl">
        <div class="bl-label">未使用的组件群组</div>
        <div class="box unused">
          <div class="urow"><svg class="i16"><use href="#u1"/></svg>右上刀塔刀具群组</div>
          <div class="urow"><svg class="i16"><use href="#u2"/></svg>右下刀塔刀具群组</div>
        </div>
        <div class="group compfiles">
          <div class="legend">组件文件</div>
          <div class="btn iconbtn"><svg class="fold"><use href="#d-folder"/></svg></div>
          <div class="cpath">C:\Users\Public\Documen...\All Components mm.mcam-gmd</div>
          <div class="box comps">
            <div class="complist">
              <div class="ccol ccol1">
                <div class="crow"><svg class="i16"><use href="#l-atc"/></svg>Automatic Tool Changer</div>
                <div class="crow"><svg class="i16"><use href="#l-block"/></svg>Drill Block</div>
                <div class="crow"><svg class="i16"><use href="#l-outlet"/></svg>Dual Outlet Right Angle Aggregate</div>
                <div class="crow"><svg class="i16"><use href="#l-outlet"/></svg>Flex Aggregate</div>
                <div class="crow"><svg class="i16"><use href="#l-outlet"/></svg>Four Outlet Right Angle Aggregate</div>
                <div class="crow"><svg class="i16"><use href="#l-axis"/></svg>HMC A Axis</div>
                <div class="crow"><svg class="i16"><use href="#l-axis"/></svg>HMC B Axis</div>
                <div class="crow"><svg class="i16"><use href="#l-axis"/></svg>HMC C Axis</div>
                <div class="crow"><svg class="i16"><use href="#l-spin"/></svg>HMC Tool Spindle</div>
                <div class="crow"><svg class="i16"><use href="#l-linear"/></svg>HMC X Axis</div>
                <div class="crow"><svg class="i16"><use href="#l-linear"/></svg>HMC Y Axis</div>
                <div class="crow"><svg class="i16"><use href="#l-linear"/></svg>HMC Z Axis</div>
                <div class="crow"><svg class="i16"><use href="#l-axis"/></svg>Lathe B Axis Arm</div>
                <div class="crow"><svg class="i16"><use href="#l-spin"/></svg>Lathe B Axis Tool Spindle</div>
              </div>
              <div class="ccol">
                <div class="crow"><svg class="i16"><use href="#l-axis"/></svg>Lathe Left Spindle</div>
                <div class="crow"><svg class="i16"><use href="#l-spin"/></svg>Lathe Left Spindle</div>
                <div class="crow"><svg class="i16"><use href="#l-linear"/></svg>Lathe Left Spindle</div>
                <div class="crow"><svg class="i16"><use href="#l-turret"/></svg>Lathe Lower Turret</div>
                <div class="crow"><svg class="i16"><use href="#l-linear"/></svg>Lathe Lower Turret</div>
                <div class="crow"><svg class="i16"><use href="#l-linear"/></svg>Lathe Lower Turret</div>
                <div class="crow"><svg class="i16"><use href="#l-linear"/></svg>Lathe Lower Turret</div>
                <div class="crow"><svg class="i16"><use href="#l-axis"/></svg>Lathe Right Spindle</div>
                <div class="crow"><svg class="i16"><use href="#l-spin"/></svg>Lathe Right Spindle</div>
                <div class="crow"><svg class="i16"><use href="#l-linear"/></svg>Lathe Right Spindle</div>
                <div class="crow"><svg class="i16"><use href="#l-steady"/></svg>Lathe Steady Rest</div>
                <div class="crow"><svg class="i16"><use href="#l-tail"/></svg>Lathe Tailstock</div>
                <div class="crow"><svg class="i16"><use href="#l-axis"/></svg>Lathe Tool Orientation</div>
                <div class="crow"><svg class="i16"><use href="#l-turret"/></svg>Lathe Upper Turret</div>
              </div>
            </div>
            <div class="hscroll"><i class="harrow hl"></i><i class="hthumb"></i><i class="harrow hr"></i></div>
          </div>
        </div>
      </div>
      <div class="br">
        <div class="br-desc">说明:</div>
        <div class="group ctrldef">
          <div class="legend">控制器定义</div>
          <div class="ctrlrow"><div class="btn iconbtn"><svg class="fold"><use href="#d-folder"/></svg></div><span>C:\Users</span></div>
          <div class="group postg">
            <div class="legend">后处理</div>
            <div class="postrow">文件夹</div>
            <div class="btn cbtn">C</div>
          </div>
        </div>
        <div class="br-mach">机床配置</div>
        <div class="box machtree">
          <div class="mrow mroot"><span class="minus"></span><svg class="i12"><use href="#m-yel"/></svg><svg class="i12"><use href="#m-chk"/></svg><svg class="i16"><use href="#m1"/></svg><em>Machine</em></div>
          <div class="mrow"><span class="plus"></span><svg class="i12"><use href="#m-yel"/></svg><svg class="i12"><use href="#m-chk"/></svg><svg class="i16"><use href="#m2"/></svg><em>Lathe</em></div>
          <div class="mrow"><span class="plus"></span><svg class="i12"><use href="#m-yel"/></svg><svg class="i12"><use href="#m-chk"/></svg><svg class="i16"><use href="#m3"/></svg><em>Right</em></div>
          <div class="mrow"><span class="plus"></span><svg class="i12"><use href="#m-yel"/></svg><svg class="i12"><use href="#m-chk"/></svg><svg class="i16"><use href="#m4"/></svg><em>Upper</em></div>
          <div class="mrow"><span class="plus"></span><svg class="i12"><use href="#m-yel"/></svg><svg class="i12"><use href="#m-chk"/></svg><svg class="i16"><use href="#m5"/></svg><em>Lower</em></div>
          <div class="mrow"><span class="plus"></span><svg class="i12"><use href="#m-yel"/></svg><svg class="i12"><use href="#m-chk"/></svg><svg class="i16"><use href="#m6"/></svg><em>Tail</em></div>
          <div class="mrow"><span class="plus"></span><svg class="i12"><use href="#m-yel"/></svg><svg class="i12"><use href="#m-chk"/></svg><svg class="i16"><use href="#m7"/></svg><em>Steady</em></div>
          <div class="mrow"><span class="plus"></span><svg class="i12"><use href="#m-yel"/></svg><svg class="i12"><use href="#m-chk"/></svg><svg class="i16"><use href="#m8"/></svg><em>Axis</em></div>
          <div class="mrow mlast"><span class="noplus"></span><svg class="i12"><use href="#m-yel"/></svg><svg class="i12"><use href="#m-chk"/></svg><svg class="i16"><use href="#m9"/></svg><em>Fixture</em></div>
        </div>
        <div class="okrow">
          <div class="btn ok"><svg class="bi-ok"><use href="#t-tick"/></svg></div>
          <div class="btn cancel"><svg class="bi-x"><use href="#t-cancel"/></svg></div>
          <div class="btn helpb"><svg class="bi-h"><use href="#t-help"/></svg></div>
        </div>
      </div>
    </div>
  </section>

  <section class="win front">
    <div class="wtitle"><svg class="wicon"><use href="#d-title"/></svg><span class="ftitle">控制定义: C:\Users\Public\Documents\Shared Mast...\DEFAULT.mcam-control</span><b class="wclose"></b></div>
    <div class="wtools wtools-front">
      <svg class="ti"><use href="#d-new"/></svg><svg class="ti"><use href="#d-open"/></svg><svg class="ti"><use href="#d-save"/></svg><svg class="ti"><use href="#d-saveall"/></svg><svg class="ti"><use href="#d-lock"/></svg>
    </div>
    <div class="fbody">
      <div class="fhead">
        <div class="btn fbtn">现有定义</div>
        <div class="ctype"><label>控制器类型:</label><div class="sel sel-off">车铣复合<i class="chev"></i></div></div>
        <label class="flab">制造商:</label>
        <div class="inp">Generic Default</div>
        <div class="btn fbtn">后处理:</div>
        <div class="sel sel-post"><svg class="i16"><use href="#t-doc"/></svg>C:\Users\Public\Documents\Shared Mastercam 2021<i class="chev"></i></div>
        <label class="flab">说明:</label>
        <div class="inp">NONE</div>
      </div>
      <div class="fmain">
        <div class="fleft">
          <div class="optlabel">控制器选项:</div>
          <div class="box tree">
            <div class="node"><b>?</b>公差设置</div>
            <div class="node"><b>?</b>传输</div>
            <div class="node"><b>?</b>文件</div>
            <div class="node"><b>?</b>NC 对话框</div>
            <div class="node"><b>?</b>NC 输出</div>
            <div class="node"><b>?</b>杂项整/实变数</div>
            <div class="node"><b>?</b>工作坐标</div>
            <div class="node"><b>?</b>刀具</div>
            <div class="node sub"><svg class="tick"><use href="#t-tick"/></svg><span class="sel-node">车床</span></div>
            <div class="node sub sublast"><b>?</b>铣床</div>
            <div class="node"><b>?</b>线性</div>
            <div class="node"><b>?</b>圆弧</div>
            <div class="node"><b>?</b>旋转</div>
            <div class="node"><b>?</b>进给速率</div>
            <div class="node"><b>?</b>切削补正</div>
            <div class="node"><b>?</b>加工循环</div>
            <div class="node"><b>?</b>子程序</div>
            <div class="node nlast"><b>?</b>文本</div>
          </div>
        </div>
        <div class="fright">
          <div class="group offs">
            <div class="legend">刀具偏置登记</div>
            <div class="ogrid">
              <span></span><span class="ohead">补正</span><span class="ohead">背面补正</span><span class="ohead">长度</span><span class="ohead">直径</span>
              <div class="opt"><i class="radio on"></i>添加到刀号</div><div class="inp">0</div><div class="inp">0</div><div class="inp">0</div><div class="inp">0</div>
              <div class="opt opt-last"><i class="radio"></i>依照刀具</div>
            </div>
          </div>
          <div class="group checks">
            <div class="legend">刀号选项(后处理)</div>
            <div class="opt"><i class="check"></i>将含车床刀路的长度登记写至 NCI 中</div>
            <div class="opt"><i class="check"></i>使用刀座号码取代刀号</div>
            <div class="opt"><i class="check"></i>使用刀座号码添加补正号码</div>
            <div class="opt"><i class="check on"></i>启用预先备刀例行程序</div>
          </div>
          <div class="group origins">
            <div class="legend">默认原点位置选项</div>
            <div class="opt"><i class="radio on"></i>从默认操作设置中获取位置</div>
            <div class="opt"><i class="radio"></i>从刀具中设置获取位置</div>
            <div class="opt"><i class="radio"></i>从机床定义中获取位置</div>
          </div>
        </div>
      </div>
      <div class="fbottom">
        <div class="descbox">车床的刀具 - 设置刀具和刀号的默认值。可由刀路管理员群组对话窗来覆盖这些设置。</div>
        <div class="okrow okrow-f">
          <div class="btn ok"><svg class="bi-ok"><use href="#t-tick"/></svg></div>
          <div class="btn cancel"><svg class="bi-x"><use href="#t-cancel"/></svg></div>
          <div class="btn helpb"><svg class="bi-h"><use href="#t-help"/></svg></div>
        </div>
      </div>
    </div>
    <i class="grip"></i>
  </section>

  <div class="note">把这里勾选上</div>
  <svg class="arrow" viewBox="0 0 365 110"><path d="M357 7L29 88 18 82 6 98 28 102 31 94z" fill="#f5221a"/></svg>
  <div class="watermark">UG爱好者论坛@tangeq1018</div>
</div>
</body>
</html>
```
FILE: styles.css
```css
* { box-sizing: border-box; }
html, body { margin: 0; padding: 0; }
body { width: 2907px; height: 1816px; overflow: hidden; background: #eee; font-family: "Open Sans", "Noto Sans CJK SC", sans-serif; font-size: 16px; color: #111; }
.defs { position: absolute; }
svg { display: block; flex: none; overflow: hidden; }
i { display: block; font-style: normal; flex: none; }

.app { position: relative; width: 2907px; height: 1816px; overflow: hidden; display: flex; flex-direction: column; }

/* title bar */
.titlebar { height: 42px; flex: none; background: #2b579a; display: flex; position: relative; }
.qat { width: 793px; flex: none; display: flex; align-items: flex-start; padding: 1px 0 0 3px; gap: 9px; }
.qi { width: 24px; height: 24px; }
.qdd { width: 0; height: 0; margin: 10px 5px 0 -8px; border: 4px solid transparent; border-top: 5px solid #fff; border-bottom: 0; }
.qdd-end { margin: 10px 0 0 0; box-shadow: 0 -3px 0 #fff; }
.qsep { width: 1px; height: 28px; background: #6d8dbc; }
.apptitle { position: absolute; left: 400px; top: 4px; width: 306px; text-align: center; color: #fff; font-size: 19px; line-height: 24px; white-space: nowrap; font-weight: 300; }
.ctxtab { width: 272px; background: #2a4c80; color: #d7b888; font-size: 18px; line-height: 32px; padding-left: 123px; }

.tabs { height: 43px; flex: none; background: #2b579a; display: flex; }
.tab { width: 78px; color: #fff; font-size: 18px; line-height: 42px; text-align: center; flex: none; }
.tab-file { margin-right: 13px; }
.tab-on { background: #f1f1f1; color: #555; }
.tab-ctx { background: #2a4c80; }
.tab-wide { width: 116px; }

/* ribbon */
.ribbon { height: 137px; flex: none; background: #f1f1f1; border-top: 1px solid #d8d8d8; border-bottom: 3px solid #d4d4d4; display: flex; padding-top: 2px; }
.rg { display: flex; flex-direction: column; border-right: 1px solid #dcdcdc; flex: none; height: 129px; }
.rg1 { width: 444px; }
.rg2 { width: 451px; padding-left: 6px; }
.rg3 { width: 452px; padding-left: 7px; }
.rg4 { width: 322px; padding-left: 8px; }
.rg5 { width: 282px; padding-left: 5px; }
.rbody { height: 102px; flex: none; padding-top: 5px; }
.rlabel { text-align: center; color: #666; font-size: 18px; line-height: 24px; margin-left: -6px; margin-top: 2px; }
.rg1 .rlabel { margin-left: -10px; }
.gallery { display: flex; width: 437px; height: 84px; background: #fff; border: 2px solid #d6d6d6; padding-top: 4px; position: relative; overflow: hidden; }
.gfirst { margin-left: -3px; width: 438px; }
.gi { width: 104px; display: flex; flex-direction: column; align-items: center; flex: none; color: #333; font-size: 18px; line-height: 22px; white-space: nowrap; }
.gi:first-child { margin-left: -1px; }
.gi:nth-child(4) { margin-right: -3px; }
.ri { width: 56px; height: 48px; margin-bottom: -1px; }
.gscroll { margin-left: auto; width: 20px; height: 80px; margin-top: -4px; display: flex; flex-direction: column; gap: 2px; background: #d6d6d6; flex: none; position: relative; }
.gscroll i { flex: 1; background: #fff; position: relative; }
.gscroll i::after { content: ""; position: absolute; left: 6px; top: 11px; border: 4px solid transparent; }
.gscroll .sup::after { border-bottom: 6px solid #c3c3c3; border-top: 0; }
.gscroll .sdn::after { border-top: 6px solid #666; border-bottom: 0; }
.gscroll .smore::after { border-top: 5px solid #777; border-bottom: 0; top: 14px; }
.gscroll .smore::before { content: ""; position: absolute; left: 6px; top: 10px; width: 8px; height: 1px; background: #777; }

.rbtns { display: flex; gap: 3px; padding-top: 2px; }
.rb { display: flex; flex-direction: column; align-items: center; font-size: 18px; line-height: 21px; color: #333; height: 98px; padding-top: 7px; text-align: center; white-space: nowrap; flex: none; position: relative; }
.rb span { display: block; }
.rb-108 { width: 108px; }
.rb-120 { width: 120px; }
.rb-72 { width: 72px; }
.rb-74 { width: 74px; }
.rb-76 { width: 76px; }
.rb-56 { width: 56px; }
.rb-58 { width: 58px; }
.rb-off { color: #b5b5b5; }
.rb-hot { background: #b9b9b9; }
.rg5 .ri { margin-bottom: 1px; }
.caret { margin-top: 6px; width: 0; height: 0; border: 6px solid transparent; border-top: 9px solid #444; border-bottom: 0; }

/* workspace */
.work { flex: 1; display: flex; min-height: 0; }
.panel { width: 905px; flex: none; background: #eee; display: flex; flex-direction: column; overflow: hidden; }
.phead { height: 48px; flex: none; background: #e6e6e6; display: flex; align-items: center; justify-content: space-between; }
.ptitle { font-size: 32px; color: #333; margin-left: -9px; line-height: 48px; }
.pctl { display: flex; align-items: center; gap: 16px; margin-right: 8px; color: #444; }
.pdrop { width: 0; height: 0; border: 6px solid transparent; border-top: 9px solid #555; border-bottom: 0; }
.ppin { width: 6px; height: 12px; border: 1.500px solid #444; border-top-width: 3px; position: relative; }
.ppin::after { content: ""; position: absolute; left: 0; top: 9px; width: 1.500px; height: 8px; background: #444; }
.pclose { font-size: 24px; line-height: 20px; font-family: "Liberation Sans", sans-serif; }
.pbar { height: 51px; flex: none; display: flex; }
.pgroup { display: flex; align-items: center; gap: 14px; flex: none; border-right: 1px solid #d4d4d4; margin: 3px 0 3px; position: relative; }
.pi { width: 36px; height: 36px; }
.pa1 { width: 100px; gap: 13px; margin-left: -2px; }
.pa2 { width: 194px; padding-left: 12px; }
.pa3 { width: 262px; padding-left: 12px; gap: 13px; }
.pa4 { width: 62px; padding-left: 12px; }
.pa5 { padding-left: 12px; border-right: 0; }
.pb1 { width: 151px; margin-left: -3px; }
.pb2 { width: 212px; padding-left: 12px; }
.pb3 { width: 193px; padding-left: 12px; }
.pb4 { padding-left: 11px; border-right: 0; }
.pdd { width: 0; height: 0; margin-left: -2px; border: 8px solid transparent; border-top: 14px solid #bdbdbd; border-bottom: 0; }
.gone { font-family: "Noto Sans", sans-serif; color: #9ab7d8; font-size: 32px; line-height: 36px; width: 36px; letter-spacing: -2px; }
.pcontent { flex: 1; background: #fff; border-top: 2px solid #dcdcdc; margin-top: 8px; margin-right: 2px; }
.splitter { width: 7px; flex: none; background: #dedede; }
.viewport { flex: 1; background: linear-gradient(#959ea8, #e9ebee); position: relative; padding: 8px 0 0 1112px; }

/* view pill */
.pill { width: 694px; height: 51px; border-radius: 26px; background: #b1b6bd; display: flex; overflow: hidden; }
.pill-lock { width: 61px; padding-left: 29px; flex: none; display: flex; align-items: center; }
.pill-a { width: 158px; display: flex; align-items: center; gap: 5px; border-right: 1px solid #9ea4ab; flex: none; padding-left: 4px; }
.pill-a .vdd { margin-left: 6px; }
.pill-b { flex: 1; display: flex; align-items: center; gap: 9px; padding-left: 4px; }
.pill-b .vdd { margin: 0 7px 0 5px; }
.pill-b .vdd:nth-of-type(2) { margin: 0; }
.v24 { width: 24px; height: 32px; }
.pill-text { color: #555c63; font-size: 18px; margin-left: -4px; line-height: 24px; margin-top: -4px; }
.vdd { width: 0; height: 0; border: 4px solid transparent; border-top: 6px solid #777; border-bottom: 0; }
.xyz { font-family: "Liberation Sans", sans-serif; font-size: 11px; color: #5f666d; line-height: 12px; width: 28px; margin-left: 5px; text-align: center; letter-spacing: -.5px; }
.xyz b { display: block; color: #6b9ac8; font-size: 18px; line-height: 14px; }
.pill-hi { width: 32px; height: 51px; background: #a2b1c0; display: flex; align-items: center; justify-content: center; flex: none; margin-right: 9px; }

/* dialog windows */
.win { position: absolute; background: #f0f0f0; border: 1px solid #a9a9a9; display: flex; flex-direction: column; }
.back { left: 661px; top: 727px; width: 1280px; height: 925px; }
.front { left: 1280px; top: 520px; width: 1242px; height: 1006px; }
.wtitle { height: 44px; flex: none; background: #fff; display: flex; align-items: center; padding-left: 12px; font-size: 18px; color: #8a8a8a; gap: 7px; white-space: nowrap; position: relative; border-bottom: 1px solid #b9b9b9; overflow: hidden; }
.wicon { width: 22px; height: 20px; }
.ftitle { letter-spacing: .15px; }
.wclose { position: absolute; right: 17px; top: 15px; width: 15px; height: 15px; background: linear-gradient(45deg, transparent 47%, #999 47%, #999 53%, transparent 53%), linear-gradient(-45deg, transparent 47%, #999 47%, #999 53%, transparent 53%); }
.wtools { height: 41px; flex: none; display: flex; align-items: center; border-bottom: 2px solid #c9c9c9; padding-left: 11px; background: #f0f0f0; gap: 7px; }
.ti { width: 24px; height: 28px; }
.wtools-back { padding-left: 13px; height: 39px; }
.tsep { width: 1px; height: 30px; background: #b6b6b6; }

.btn { background: #e1e1e1; border: 1px solid #adadad; display: flex; align-items: center; justify-content: center; color: #111; flex: none; }
.box { background: #fff; border: 1px solid #8a8d96; }
.group { border: 1px solid #dbdbdb; position: relative; }
.legend { position: absolute; left: 6px; top: -11px; background: #f0f0f0; padding: 0 3px; line-height: 20px; color: #111; white-space: nowrap; }

/* back dialog */
.backbody { display: flex; padding-left: 16px; flex: 1; min-height: 0; }
.bl { width: 469px; flex: none; padding-top: 29px; }
.bl-label { line-height: 20px; padding-left: 20px; }
.unused { height: 234px; margin-top: 9px; padding: 1px 0 0 2px; }
.urow { display: flex; align-items: center; height: 20px; gap: 2px; line-height: 20px; }
.i16 { width: 16px; height: 16px; }
.compfiles { margin-top: 40px; height: 432px; padding: 23px 0 0 20px; }
.iconbtn { width: 39px; height: 36px; }
.fold { width: 18px; height: 14px; }
.cpath { margin-top: 10px; line-height: 20px; white-space: nowrap; font-size: 15px; }
.comps { width: 430px; height: 315px; margin-top: 13px; overflow: hidden; position: relative; display: flex; flex-direction: column; }
.complist { display: flex; height: 289px; flex: none; font-size: 15.300px; overflow: hidden; }
.ccol { flex: none; white-space: nowrap; }
.ccol1 { width: 285px; padding-left: 2px; }
.crow { display: flex; align-items: center; height: 20px; gap: 2px; line-height: 20px; }
.hscroll { height: 24px; background: #f0f0f0; display: flex; align-items: center; flex: none; padding-left: 10px; }
.hthumb { width: 75px; height: 24px; background: #cdcdcd; margin-left: 12px; }
.harrow { width: 9px; height: 9px; border-left: 2.500px solid #666; border-bottom: 2.500px solid #666; transform: rotate(45deg); margin-left: 2px; }
.hr { transform: rotate(-135deg); margin-left: 310px; }

.br { width: 738px; flex: none; margin-left: 39px; padding-top: 50px; }
.br-desc { line-height: 20px; }
.ctrldef { margin-top: 26px; height: 184px; padding: 21px 0 0 16px; }
.ctrlrow { display: flex; align-items: center; gap: 12px; }
.postg { margin-top: 20px; height: 91px; width: 600px; }
.postrow { padding: 20px 0 0 34px; line-height: 20px; }
.cbtn { position: absolute; left: 70px; top: 53px; width: 60px; height: 27px; justify-content: flex-start; padding-left: 3px; }
.br-mach { line-height: 20px; margin-top: 14px; }
.machtree { height: 440px; margin-top: 10px; padding-top: 2px; overflow: hidden; position: relative; }
.machtree::before { content: ""; position: absolute; left: 31px; top: 30px; height: 150px; border-left: 1px dotted #111; }
.mrow { height: 20px; display: flex; align-items: center; padding-left: 25px; position: relative; white-space: nowrap; }
.mrow::before { content: ""; position: absolute; left: 37px; width: 5px; top: 10px; border-top: 1px dotted #111; }
.mrow em { font-style: normal; margin-left: 4px; line-height: 20px; font-size: 16px; color: #111; }
.mroot { padding-left: 6px; }
.mroot::before { left: 18px; }
.mlast::before { display: none; }
.mroot em { color: #1d2c55; }
.i12 { width: 12px; height: 12px; }
.minus, .plus, .noplus { width: 12px; height: 12px; flex: none; margin-right: 5px; border: 1px solid #999; background: #eee; position: relative; }
.noplus { border: 0; background: transparent; border-left: 1px dotted #111; border-bottom: 1px dotted #111; height: 10px; margin-top: -8px; margin-left: 6px; width: 11px; margin-right: 0; }
.minus::before, .plus::before { content: ""; position: absolute; left: 1px; right: 1px; top: 4px; height: 2px; background: #46608c; }
.plus::after { content: ""; position: absolute; top: 1px; bottom: 1px; left: 4px; width: 2px; background: #46608c; }
.okrow { display: flex; gap: 13px; justify-content: flex-end; padding: 18px 2px 0 0; }
.ok, .cancel, .helpb { width: 78px; height: 42px; }
.ok { border: 2px solid #0078d7; }
.bi-ok { width: 16px; height: 20px; }
.bi-x { width: 20px; height: 22px; }
.bi-h { width: 16px; height: 24px; }

/* front dialog */
.fbody { flex: 1; padding: 32px 0 0 10px; min-height: 0; }
.fhead { display: grid; grid-template-columns: 163px 419px 149px 472px; row-gap: 7px; grid-auto-rows: 34px; }
.fbtn { width: 153px; height: 33px; }
.ctype { display: flex; justify-content: flex-end; align-items: flex-start; gap: 12px; }
.ctype label { line-height: 30px; }
.sel { display: flex; align-items: center; position: relative; white-space: nowrap; }
.sel-off { width: 281px; height: 27px; background: #ccc; border: 1px solid #bdbdbd; color: #808080; padding-left: 3px; }
.sel-post { width: 419px; height: 28px; margin-top: 1px; background: #fff; border: 1px solid #888; gap: 6px; padding-left: 3px; font-size: 15px; }
.chev { position: absolute; right: 5px; top: 8px; width: 7px; height: 7px; border-right: 1px solid #555; border-bottom: 1px solid #555; transform: rotate(45deg); }
.sel-off .chev { border-color: #999; }
.flab { padding: 8px 0 0 27px; line-height: 20px; }
.inp { background: #fff; border: 1px solid #888; border-top-color: #aaa; height: 34px; padding-left: 3px; line-height: 22px; font-size: 15px; color: #111; }
.fmain { display: flex; margin-top: 18px; height: 628px; }
.fleft { width: 224px; flex: none; }
.optlabel { line-height: 20px; padding-left: 8px; }
.tree { height: 600px; margin-top: 7px; padding-top: 1px; }
.node { height: 22px; display: flex; align-items: center; padding-left: 25px; line-height: 22px; position: relative; white-space: nowrap; color: #111; }
.node b { color: #e812e8; font-family: "Liberation Sans", sans-serif; font-weight: 700; font-size: 20px; width: 17px; flex: none; }
.node::before { content: ""; position: absolute; left: 12px; width: 12px; top: 11px; border-top: 1px dotted #777; }
.node::after { content: ""; position: absolute; left: 12px; top: 0; bottom: 0; border-left: 1px dotted #777; }
.nlast::after { bottom: 11px; }
.sub { padding-left: 44px; background: linear-gradient(#777 50%, transparent 50%) 12px 0 / 1px 2px repeat-y; }
.sub::before { left: 32px; width: 11px; }
.sub::after { left: 32px; }
.sublast::after { bottom: 11px; }
.tick { width: 15px; height: 20px; margin-right: 2px; }
.sel-node { background: #f0f0f0; }
.fright { width: 942px; margin-left: 33px; padding-top: 24px; flex: none; }
.offs { height: 114px; }
.ogrid { display: grid; grid-template-columns: 142px repeat(4, 158px); column-gap: 22px; grid-template-rows: 20px 34px 20px; row-gap: 8px; padding: 7px 0 0 9px; }
.ohead { text-align: center; line-height: 20px; }
.opt { display: flex; align-items: center; gap: 4px; height: 20px; white-space: nowrap; line-height: 20px; }
.ogrid .opt { height: 34px; }
.ogrid .opt-last { grid-column: 1; height: 20px; margin-top: 2px; }
.radio { width: 20px; height: 20px; border-radius: 50%; border: 1px solid #555; background: #fff; position: relative; }
.radio.on::after { content: ""; position: absolute; left: 4px; top: 4px; width: 10px; height: 10px; border-radius: 50%; background: #333; }
.check { width: 20px; height: 20px; border: 1px solid #333; background: #fff; position: relative; }
.check.on::after { content: ""; position: absolute; left: 6px; top: 1px; width: 6px; height: 13px; border-right: 1.500px solid #222; border-bottom: 1.500px solid #222; transform: rotate(38deg); }
.checks { margin-top: 18px; height: 149px; padding: 22px 0 0 9px; display: flex; flex-direction: column; gap: 10px; }
.origins { margin-top: 19px; height: 109px; padding: 18px 0 0 9px; display: flex; flex-direction: column; gap: 10px; }
.fbottom { display: flex; padding-left: 242px; margin-top: 52px; }
.descbox { width: 677px; height: 77px; border: 1px solid #c9c9c9; border-bottom: 2px solid #fff; box-shadow: 0 1px 0 #c9c9c9; padding: 3px 5px; color: #888; line-height: 20px; font-size: 15.500px; white-space: nowrap; flex: none; }
.okrow-f { padding: 44px 0 0 25px; gap: 17px; justify-content: flex-start; }
.grip { position: absolute; right: 2px; bottom: 2px; width: 9px; height: 9px; background: repeating-linear-gradient(90deg, #aaa 0 3px, transparent 3px 5px); }

.note { position: absolute; left: 2102px; top: 925px; color: #f5302a; font-size: 32px; line-height: 42px; white-space: nowrap; }
.arrow { position: absolute; left: 1740px; top: 905px; width: 365px; height: 110px; }
.watermark { position: absolute; right: 2px; bottom: 2px; font-family: "Liberation Serif", "Noto Sans CJK SC", serif; font-size: 15px; letter-spacing: .5px; line-height: 16px; color: #777; white-space: nowrap; }
```
